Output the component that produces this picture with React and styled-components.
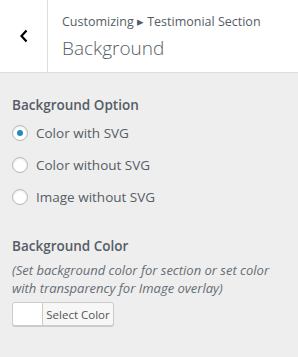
import React, { useState } from "react";
import styled, { createGlobalStyle } from "styled-components";

const Global = createGlobalStyle`
  html, body { margin: 0; padding: 0; background: #eeeeee; }
  body { font-family: "Open Sans", "Noto Sans", sans-serif; color: #555d66; }
  * { box-sizing: border-box; }
`;

const Panel = styled.div`
  width: 298px;
  height: 357px;
  background: #eeeeee;
  display: flex;
  flex-direction: column;
`;

const Header = styled.div`
  display: flex;
  height: 73px;
  background: #ffffff;
  border-bottom: 1px solid #dddddd;
`;

const BackButton = styled.button`
  width: 48px;
  border: none;
  border-right: 1px solid #dddddd;
  background: #ffffff;
  padding: 0;
  display: flex;
  align-items: center;
  justify-content: center;
  cursor: pointer;
`;

const TitleBlock = styled.div`
  display: flex;
  flex-direction: column;
  padding: 12px 0 0 14px;
`;

const Crumb = styled.span`
  font-size: 12.5px;
  line-height: 20px;
  color: #555d66;
`;

const Title = styled.h3`
  margin: 2px 0 0;
  font-size: 19px;
  font-weight: 300;
  line-height: 28px;
  color: #555d66;
`;

const Body = styled.div`
  display: flex;
  flex-direction: column;
  padding: 22px 12px 0 12px;
`;

const SectionTitle = styled.div`
  font-size: 13.5px;
  font-weight: 600;
  line-height: 20px;
  color: #555d66;
  margin-bottom: ${(p) => p.$gap || 4}px;
`;

const RadioList = styled.div`
  display: flex;
  flex-direction: column;
  gap: 12px;
`;

const RadioRow = styled.label`
  display: flex;
  align-items: center;
  gap: 8px;
  font-size: 13.5px;
  line-height: 20px;
  color: #555d66;
  cursor: pointer;
`;

const RadioCircle = styled.span`
  width: 16px;
  height: 16px;
  border-radius: 50%;
  border: 1px solid #b4b9be;
  background: #ffffff;
  box-shadow: inset 0 1px 2px rgba(0, 0, 0, 0.1);
  display: flex;
  align-items: center;
  justify-content: center;
  &::after {
    content: "";
    width: 6px;
    height: 6px;
    border-radius: 50%;
    background: ${(p) => (p.$checked ? "#1e8cbe" : "transparent")};
  }
`;

const ColorSection = styled.div`
  display: flex;
  flex-direction: column;
  margin-top: 29px;
`;

const Description = styled.div`
  font-size: 13px;
  font-style: italic;
  line-height: 18px;
  color: #666d74;
  margin-bottom: 5px;
`;

const ColorButton = styled.button`
  display: flex;
  align-items: stretch;
  width: 102px;
  height: 24px;
  padding: 0;
  border: 1px solid #cccccc;
  border-radius: 3px;
  background: #f7f7f7;
  box-shadow: 0 1px 0 #cccccc;
  overflow: hidden;
  font-family: inherit;
  cursor: pointer;
`;

const Swatch = styled.span`
  width: 30px;
  background: #ffffff;
  border-right: 1px solid #cccccc;
`;

const ButtonText = styled.span`
  flex: 1;
  display: flex;
  align-items: center;
  justify-content: center;
  font-size: 11.5px;
  color: #555555;
`;

const options = ["Color with SVG", "Color without SVG", "Image without SVG"];

export default function App() {
  const [sel, setSel] = useState(0);
  return (
    <Panel>
      <Global />
      <Header>
        <BackButton aria-label="Back">
          <svg width="10" height="14" viewBox="0 0 10 14">
            <path d="M7.5 1.5 L2.5 7 L7.5 12.5" fill="none" stroke="#000" strokeWidth="2.2" />
          </svg>
        </BackButton>
        <TitleBlock>
          <Crumb>Customizing ▸ Testimonial Section</Crumb>
          <Title>Background</Title>
        </TitleBlock>
      </Header>
      <Body>
        <SectionTitle $gap={8}>Background Option</SectionTitle>
        <RadioList>
          {options.map((o, i) => (
            <RadioRow key={o} onClick={() => setSel(i)}>
              <RadioCircle $checked={sel === i} />
              {o}
            </RadioRow>
          ))}
        </RadioList>
        <ColorSection>
          <SectionTitle $gap={5}>Background Color</SectionTitle>
          <Description>
            (Set background color for section or set color with transparency for Image overlay)
          </Description>
          <ColorButton>
            <Swatch />
            <ButtonText>Select Color</ButtonText>
          </ColorButton>
        </ColorSection>
      </Body>
    </Panel>
  );
}
